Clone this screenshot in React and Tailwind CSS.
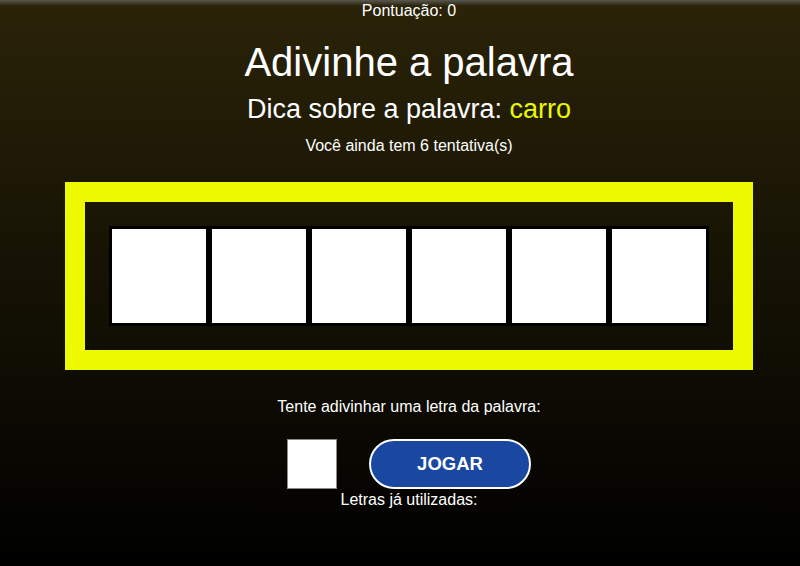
export default function App() {
  const boxes = [0, 1, 2, 3, 4, 5];
  return (
    <div
      className="w-full h-[566px] overflow-hidden bg-[linear-gradient(to_bottom,#5a5850_0px,#2a2308_6px,#000000_100%)] text-white"
      style={{ fontFamily: '"Liberation Sans", Arial, sans-serif' }}
    >
      <div className="pl-[18px] flex flex-col items-center">
        <div className="pt-[2px] text-[16px] leading-[18px]">Pontuação: 0</div>
        <h1 className="mt-[19px] text-[40px] leading-[46px] font-normal">Adivinhe a palavra</h1>
        <h2 className="mt-[9px] text-[27px] leading-[31px] font-normal">
          Dica sobre a palavra: <span className="text-[#eaf800]">carro</span>
        </h2>
        <p className="mt-[12px] text-[16px] leading-[18px]">Você ainda tem 6 tentativa(s)</p>
        <div className="mt-[27px] border-[20px] border-[#eefb00] p-[24px] flex">
          {boxes.map((b) => (
            <div key={b} className="w-[100px] h-[100px] border-[3px] border-black bg-white"></div>
          ))}
        </div>
        <p className="mt-[28px] text-[16px] leading-[18px]">Tente adivinhar uma letra da palavra:</p>
        <div className="mt-[23px] flex items-center gap-[32px]">
          <div className="w-[50px] h-[50px] bg-white border border-[#8a8a8a]"></div>
          <button className="w-[162px] h-[50px] rounded-full bg-[#1a47a0] border-2 border-white text-white font-bold text-[18.5px] flex items-center justify-center">
            JOGAR
          </button>
        </div>
        <p className="mt-[2px] text-[16px] leading-[18px]">Letras já utilizadas:</p>
      </div>
    </div>
  );
}
